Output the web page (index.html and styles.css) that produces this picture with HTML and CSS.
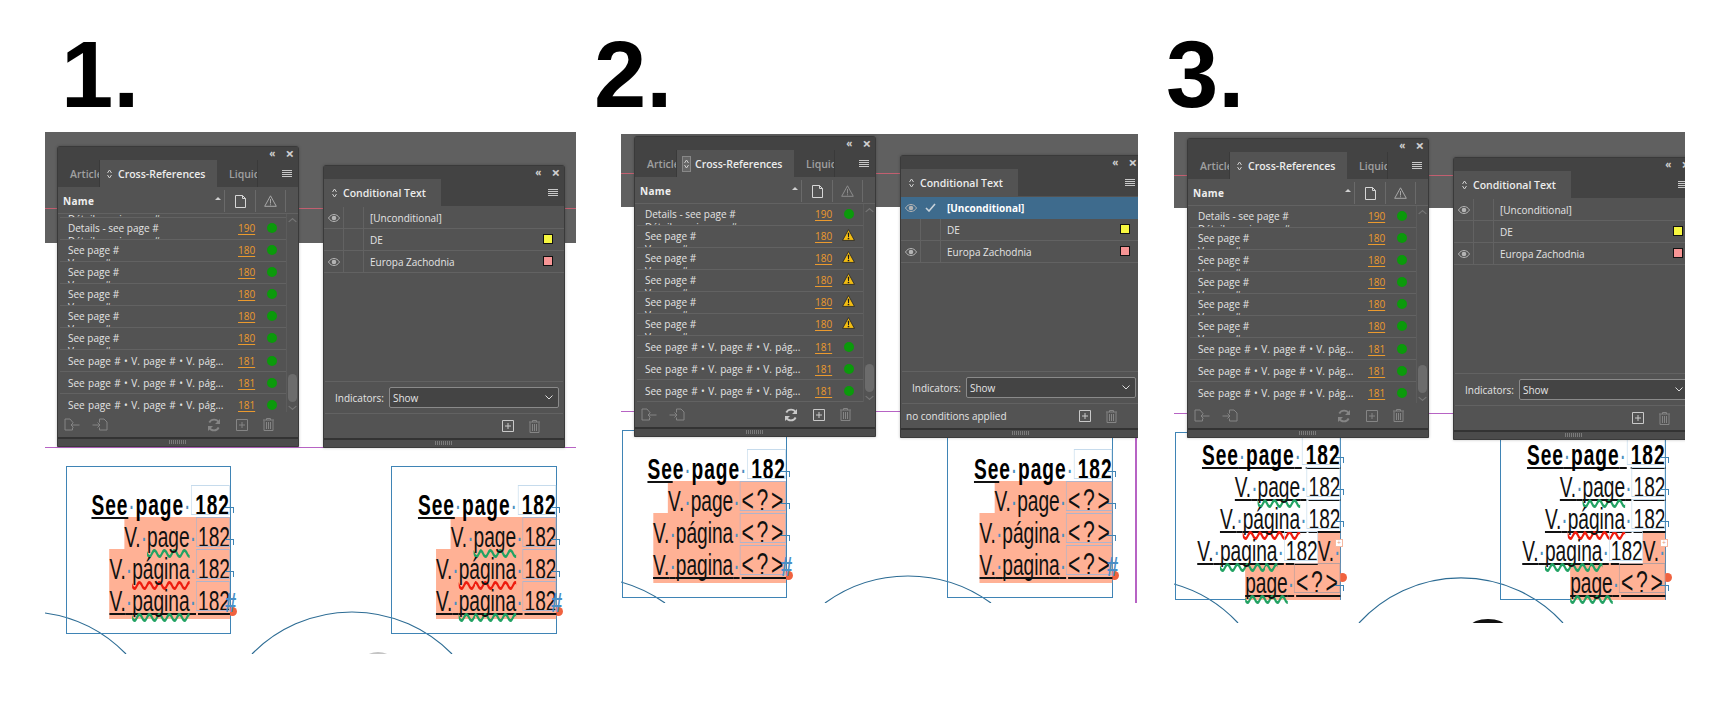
FILE: index.html
```html
<!DOCTYPE html>
<html lang="en">
<head>
    <meta charset="UTF-8">
    <meta name="viewport" content="width=device-width, initial-scale=1.0">
    <title>Cross-References and Conditional Text</title>
    <link rel="stylesheet" href="styles.css">
</head>
<body>
    <svg class="sprite" width="0" height="0">
        <symbol id="i-out" viewBox="0 0 16 14"><path d="M8.5 4.500V4L6 1H1v11h7.500V9.500M15.500 7H7M9.500 4.500 7 7l2.500 2.500" fill="none" stroke="currentColor"/></symbol>
        <symbol id="i-in" viewBox="0 0 16 14"><path d="M7.500 4.500V1H12l3 3v8H7.500V9.500M.5 7H8M5.500 4.500 8 7l-2.500 2.500" fill="none" stroke="currentColor"/></symbol>
        <symbol id="i-sync" viewBox="0 0 14 14"><path d="M11.800 4.500A5.300 5.300 0 0 0 2.300 4.500M2.200 9.500a5.300 5.300 0 0 0 9.500 0" fill="none" stroke="currentColor" stroke-width="1.800"/><path d="M13 1v5H8zM1 13V8h5z" fill="currentColor"/></symbol>
        <symbol id="i-new" viewBox="0 0 12 12"><path d="M.5.500h11v11H.500zM6 3v6M3 6h6" fill="none" stroke="currentColor"/></symbol>
        <symbol id="i-trash" viewBox="0 0 11 13"><path d="M0 2h11M3.500 2V.500h4V2M1 2.500v10h9v-10M3.500 4v7M5.500 4v7M7.500 4v7" fill="none" stroke="currentColor"/></symbol>
        <symbol id="i-eye" viewBox="0 0 12 8"><path d="M.5 4C2 1.500 4 .5 6 .5S10 1.500 11.500 4C10 6.500 8 7.500 6 7.500S2 6.500.5 4z" fill="none" stroke="currentColor"/><circle cx="6" cy="4" r="2.300" fill="currentColor"/></symbol>
        <symbol id="i-warn" viewBox="0 0 12 11"><path d="M6 .5 11.500 10.500H.5z" fill="#f3bd12" stroke="#2a2a2a" stroke-width=".8"/><path d="M5.300 3.500h1.400L6.400 7.500h-.8zM5.300 8.200h1.400v1.300H5.300z" fill="#1a1a1a"/></symbol>
        <symbol id="i-chev" viewBox="0 0 5 10"><path d="M.5 4 2.500 1l2 3M.5 6l2 3 2-3" fill="none" stroke="currentColor"/></symbol>
    </svg>

    <div class="sheet">

        <!-- 1 -->
        <section class="fig fig-1">
            <h2 class="num">1.</h2>
            <div class="stage">
                <div class="band"></div>
                <div class="guide guide-pink"></div>
                <div class="guide guide-purple"></div>
                <svg class="arcs" width="531" height="522">
                    <path d="M0 481A140 140 0 0 1 81 522M207 522A140 140 0 0 1 407 522"/>
                    <ellipse class="blob-gray" cx="333" cy="526" rx="12" ry="6"/>
                </svg>

                <div class="frame frame-a">
                    <div class="story">
                        <div class="line bold"><span class="ul">See</span><i class="sp">·</i>page<i class="sp">·</i><span class="ref ref-first">182</span></div>
                        <div class="line"><span class="hl">V.<i class="sp">·</i><span class="wavy-g">page</span><i class="sp">·</i><span class="ref">182</span></span></div>
                        <div class="line"><span class="hl">V.<i class="sp">·</i><span class="wavy-r">página</span><i class="sp">·</i><span class="ref">182</span></span></div>
                        <div class="line"><span class="hl hl-last"><span class="ul">V.<i class="sp">·</i><span class="wavy-g">pagina</span><i class="sp">·</i></span><span class="ref ul">182</span></span></div>
                    </div>
                    <div class="marks"><b class="hook"></b><b class="hook"></b><b class="hook"></b><b class="end">#</b></div>
                    <b class="overset"></b>
                </div>
                <div class="frame frame-b">
                    <div class="story">
                        <div class="line bold"><span class="ul">See</span><i class="sp">·</i>page<i class="sp">·</i><span class="ref ref-first">182</span></div>
                        <div class="line"><span class="hl">V.<i class="sp">·</i><span class="wavy-g">page</span><i class="sp">·</i><span class="ref">182</span></span></div>
                        <div class="line"><span class="hl">V.<i class="sp">·</i><span class="wavy-r">página</span><i class="sp">·</i><span class="ref">182</span></span></div>
                        <div class="line"><span class="hl hl-last"><span class="ul">V.<i class="sp">·</i><span class="wavy-g">pagina</span><i class="sp">·</i></span><span class="ref ul">182</span></span></div>
                    </div>
                    <div class="marks"><b class="hook"></b><b class="hook"></b><b class="hook"></b><b class="end">#</b></div>
                    <b class="overset"></b>
                </div>

                <div class="panel panel-xref">
                    <div class="panel-top"><span class="collapse">«</span><span class="close">×</span></div>
                    <div class="tabs">
                        <div class="tab tab-first"><span>Article</span></div>
                        <div class="tab tab-on"><svg class="chev"><use href="#i-chev"/></svg>Cross-References</div>
                        <div class="tab tab-last"><span>Liquid</span></div>
                        <div class="menu"><b></b><b></b><b></b><b></b></div>
                    </div>
                    <div class="xref-head">
                        <strong>Name</strong><span class="sort"></span>
                        <div class="col"><svg width="11" height="13" viewBox="0 0 11 13"><path d="M.5.500h7l3 3v9H.500zM7.500.500v3h3" fill="none" stroke="#d6d6d6"/></svg></div>
                        <div class="col"><svg width="13" height="12" viewBox="0 0 13 12"><path d="M6.500.8 12.300 11.300H.7zM6.500 4v4.500M6.500 9.300v1" fill="none" stroke="#a8a8a8"/></svg></div>
                    </div>
                    <div class="xref-body">
                        <div class="rows">
                            <div class="row row-peek"><div class="name"><span class="next">Détails - voir page #</span></div></div>
                            <div class="row"><div class="name">Details - see page #<span class="next">Détails - voir page #</span></div><a class="page">190</a><b class="dot"></b></div>
                            <div class="row"><div class="name">See page #<span class="next">V. page #</span></div><a class="page">180</a><b class="dot"></b></div>
                            <div class="row"><div class="name">See page #<span class="next">V. page #</span></div><a class="page">180</a><b class="dot"></b></div>
                            <div class="row"><div class="name">See page #<span class="next">V. page #</span></div><a class="page">180</a><b class="dot"></b></div>
                            <div class="row"><div class="name">See page #<span class="next">V. page #</span></div><a class="page">180</a><b class="dot"></b></div>
                            <div class="row"><div class="name">See page #<span class="next">V. page #</span></div><a class="page">180</a><b class="dot"></b></div>
                            <div class="row row-long"><div class="name">See page # • V. page # • V. pág...</div><a class="page">181</a><b class="dot"></b></div>
                            <div class="row row-long"><div class="name">See page # • V. page # • V. pág...</div><a class="page">181</a><b class="dot"></b></div>
                            <div class="row row-long"><div class="name">See page # • V. page # • V. pág...</div><a class="page">181</a><b class="dot"></b></div>
                        </div>
                        <div class="scroll"><span class="up"></span><span class="thumb"></span><span class="down"></span></div>
                    </div>
                    <div class="foot">
                        <svg class="ico ico-wide"><use href="#i-out"/></svg>
                        <svg class="ico ico-wide"><use href="#i-in"/></svg>
                        <svg class="ico ico-sync push"><use href="#i-sync"/></svg>
                        <svg class="ico ico-new"><use href="#i-new"/></svg>
                        <svg class="ico ico-trash"><use href="#i-trash"/></svg>
                    </div>
                    <div class="grip"><span></span></div>
                </div>

                <div class="panel panel-cond">
                    <div class="panel-top"><span class="collapse">«</span><span class="close">×</span></div>
                    <div class="tabs">
                        <div class="tab tab-on tab-cond"><svg class="chev"><use href="#i-chev"/></svg>Conditional Text</div>
                        <div class="menu"><b></b><b></b><b></b><b></b></div>
                    </div>
                    <div class="cond-list">
                        <div class="cond-row"><div class="cond-eye"><svg><use href="#i-eye"/></svg></div><div class="cond-check"></div><div class="cond-name">[Unconditional]</div></div>
                        <div class="cond-row"><div class="cond-eye"></div><div class="cond-check"></div><div class="cond-name">DE</div><b class="swatch swatch-y"></b></div>
                        <div class="cond-row"><div class="cond-eye"><svg><use href="#i-eye"/></svg></div><div class="cond-check"></div><div class="cond-name">Europa Zachodnia</div><b class="swatch swatch-p"></b></div>
                    </div>
                    <div class="indicators"><label>Indicators:</label><div class="select">Show<svg width="8" height="5" viewBox="0 0 8 5"><path d="M.5.500 4 4 7.500.500" fill="none" stroke="#ddd"/></svg></div></div>
                    <div class="foot">
                        <svg class="ico ico-new bright push"><use href="#i-new"/></svg>
                        <svg class="ico ico-trash"><use href="#i-trash"/></svg>
                    </div>
                    <div class="grip"><span></span></div>
                </div>
            </div>
        </section>

        <!-- 2 -->
        <section class="fig fig-2">
            <h2 class="num">2.</h2>
            <div class="stage">
                <div class="band"></div>
                <div class="guide guide-pink"></div>
                <div class="guide guide-purple"></div>
                <div class="guide-v"></div>
                <svg class="arcs" width="517" height="469">
                    <path d="M0 448A141 141 0 0 1 44 469M204 469A141 141 0 0 1 370 469"/>
                </svg>

                <div class="frame frame-a">
                    <div class="story">
                        <div class="line bold"><span class="ul">Se</span>e<i class="sp">·</i>page<i class="sp">·</i><span class="ref ref-first">182</span></div>
                        <div class="line"><span class="hl">V.<i class="sp">·</i>page<i class="sp">·</i><span class="ref ref-q">&lt;?&gt;</span></span></div>
                        <div class="line"><span class="hl">V.<i class="sp">·</i>página<i class="sp">·</i><span class="ref ref-q">&lt;?&gt;</span></span></div>
                        <div class="line"><span class="hl hl-last"><span class="ul">V.<i class="sp">·</i>pagina<i class="sp">·</i></span><span class="ref ref-q ul">&lt;?&gt;</span></span></div>
                    </div>
                    <div class="marks"><b class="hook"></b><b class="hook"></b><b class="hook"></b><b class="end">#</b></div>
                    <b class="overset"></b>
                </div>
                <div class="frame frame-b">
                    <div class="story">
                        <div class="line bold"><span class="ul">Se</span>e<i class="sp">·</i>page<i class="sp">·</i><span class="ref ref-first">182</span></div>
                        <div class="line"><span class="hl">V.<i class="sp">·</i>page<i class="sp">·</i><span class="ref ref-q">&lt;?&gt;</span></span></div>
                        <div class="line"><span class="hl">V.<i class="sp">·</i>página<i class="sp">·</i><span class="ref ref-q">&lt;?&gt;</span></span></div>
                        <div class="line"><span class="hl hl-last"><span class="ul">V.<i class="sp">·</i>pagina<i class="sp">·</i></span><span class="ref ref-q ul">&lt;?&gt;</span></span></div>
                    </div>
                    <div class="marks"><b class="hook"></b><b class="hook"></b><b class="hook"></b><b class="end">#</b></div>
                    <b class="overset"></b>
                </div>

                <div class="panel panel-xref">
                    <div class="panel-top"><span class="collapse">«</span><span class="close">×</span></div>
                    <div class="tabs">
                        <div class="tab tab-first"><span>Article</span></div>
                        <div class="tab tab-on"><svg class="chev chev-box"><use href="#i-chev"/></svg>Cross-References</div>
                        <div class="tab tab-last"><span>Liquid</span></div>
                        <div class="menu"><b></b><b></b><b></b><b></b></div>
                    </div>
                    <div class="xref-head">
                        <strong>Name</strong><span class="sort"></span>
                        <div class="col"><svg width="11" height="13" viewBox="0 0 11 13"><path d="M.5.500h7l3 3v9H.500zM7.500.500v3h3" fill="none" stroke="#d6d6d6"/></svg></div>
                        <div class="col"><svg width="13" height="12" viewBox="0 0 13 12"><path d="M6.500.8 12.300 11.300H.7zM6.500 4v4.500M6.500 9.300v1" fill="none" stroke="#8c8c8c"/></svg></div>
                    </div>
                    <div class="xref-body">
                        <div class="rows">
                            <div class="row"><div class="name">Details - see page #<span class="next">Détails - voir page #</span></div><a class="page">190</a><b class="dot"></b></div>
                            <div class="row"><div class="name">See page #<span class="next">V. page #</span></div><a class="page">180</a><svg class="warn"><use href="#i-warn"/></svg></div>
                            <div class="row"><div class="name">See page #<span class="next">V. page #</span></div><a class="page">180</a><svg class="warn"><use href="#i-warn"/></svg></div>
                            <div class="row"><div class="name">See page #<span class="next">V. page #</span></div><a class="page">180</a><svg class="warn"><use href="#i-warn"/></svg></div>
                            <div class="row"><div class="name">See page #<span class="next">V. page #</span></div><a class="page">180</a><svg class="warn"><use href="#i-warn"/></svg></div>
                            <div class="row"><div class="name">See page #<span class="next">V. page #</span></div><a class="page">180</a><svg class="warn"><use href="#i-warn"/></svg></div>
                            <div class="row row-long"><div class="name">See page # • V. page # • V. pág...</div><a class="page">181</a><b class="dot"></b></div>
                            <div class="row row-long"><div class="name">See page # • V. page # • V. pág...</div><a class="page">181</a><b class="dot"></b></div>
                            <div class="row row-long"><div class="name">See page # • V. page # • V. pág...</div><a class="page">181</a><b class="dot"></b></div>
                        </div>
                        <div class="scroll"><span class="up"></span><span class="thumb"></span><span class="down"></span></div>
                    </div>
                    <div class="foot">
                        <svg class="ico ico-wide"><use href="#i-out"/></svg>
                        <svg class="ico ico-wide"><use href="#i-in"/></svg>
                        <svg class="ico ico-sync bright push"><use href="#i-sync"/></svg>
                        <svg class="ico ico-new bright"><use href="#i-new"/></svg>
                        <svg class="ico ico-trash"><use href="#i-trash"/></svg>
                    </div>
                    <div class="grip"><span></span></div>
                </div>

                <div class="panel panel-cond">
                    <div class="panel-top"><span class="collapse">«</span><span class="close">×</span></div>
                    <div class="tabs">
                        <div class="tab tab-on tab-cond"><svg class="chev"><use href="#i-chev"/></svg>Conditional Text</div>
                        <div class="menu"><b></b><b></b><b></b><b></b></div>
                    </div>
                    <div class="cond-list">
                        <div class="cond-row cond-sel"><div class="cond-eye"><svg><use href="#i-eye"/></svg></div><div class="cond-check"><svg width="11" height="9" viewBox="0 0 11 9"><path d="M1 5l3 3 6-7" fill="none" stroke="#c8d2da" stroke-width="1.600"/></svg></div><div class="cond-name">[Unconditional]</div></div>
                        <div class="cond-row"><div class="cond-eye"></div><div class="cond-check"></div><div class="cond-name">DE</div><b class="swatch swatch-y"></b></div>
                        <div class="cond-row"><div class="cond-eye"><svg><use href="#i-eye"/></svg></div><div class="cond-check"></div><div class="cond-name">Europa Zachodnia</div><b class="swatch swatch-p"></b></div>
                    </div>
                    <div class="indicators"><label>Indicators:</label><div class="select">Show<svg width="8" height="5" viewBox="0 0 8 5"><path d="M.5.500 4 4 7.500.500" fill="none" stroke="#ddd"/></svg></div></div>
                    <div class="foot">
                        <span class="foot-note">no conditions applied</span>
                        <svg class="ico ico-new bright push"><use href="#i-new"/></svg>
                        <svg class="ico ico-trash"><use href="#i-trash"/></svg>
                    </div>
                    <div class="grip"><span></span></div>
                </div>
            </div>
        </section>

        <!-- 3 -->
        <section class="fig fig-3">
            <h2 class="num">3.</h2>
            <div class="stage">
                <div class="band"></div>
                <div class="guide guide-pink"></div>
                <div class="guide guide-purple"></div>
                <svg class="arcs" width="511" height="491">
                    <path d="M0 452A138 138 0 0 1 64 491M185 491A138 138 0 0 1 389 491"/>
                    <ellipse class="blob-dark" cx="314" cy="494" rx="17" ry="7"/>
                </svg>

                <div class="frame frame-a">
                    <div class="story">
                        <div class="line bold"><span class="ul">See<i class="sp">·</i>page<i class="sp">·</i></span><span class="ref ref-first ul">182</span></div>
                        <div class="line"><span class="ul">V.<i class="sp">·</i><span class="wavy-g">page</span><i class="sp">·</i></span><span class="ref ul">182</span></div>
                        <div class="line"><span class="ul">V.<i class="sp">·</i><span class="wavy-r">página</span><i class="sp">·</i></span><span class="ref ul">182</span></div>
                        <div class="line"><span class="ul">V.<i class="sp">·</i><span class="wavy-g">pagina</span><i class="sp">·</i></span><span class="ref ul">182</span><span class="hl">V.<i class="sp">·</i></span></div>
                        <div class="line"><span class="hl hl-last"><span class="ul"><span class="wavy-g">page</span><i class="sp">·</i></span><span class="ref ref-q ul">&lt;?&gt;</span></span></div>
                    </div>
                    <div class="marks"><b class="hook"></b><b class="hook"></b><b class="hook"></b><b class="plus">+</b><b class="hook"></b></div>
                    <b class="overset"></b>
                </div>
                <div class="frame frame-b">
                    <div class="story">
                        <div class="line bold"><span class="ul">See<i class="sp">·</i>page<i class="sp">·</i></span><span class="ref ref-first ul">182</span></div>
                        <div class="line"><span class="ul">V.<i class="sp">·</i><span class="wavy-g">page</span><i class="sp">·</i></span><span class="ref ul">182</span></div>
                        <div class="line"><span class="ul">V.<i class="sp">·</i><span class="wavy-r">página</span><i class="sp">·</i></span><span class="ref ul">182</span></div>
                        <div class="line"><span class="ul">V.<i class="sp">·</i><span class="wavy-g">pagina</span><i class="sp">·</i></span><span class="ref ul">182</span><span class="hl">V.<i class="sp">·</i></span></div>
                        <div class="line"><span class="hl hl-last"><span class="ul"><span class="wavy-g">page</span><i class="sp">·</i></span><span class="ref ref-q ul">&lt;?&gt;</span></span></div>
                    </div>
                    <div class="marks"><b class="hook"></b><b class="hook"></b><b class="hook"></b><b class="plus">+</b><b class="hook"></b></div>
                    <b class="overset"></b>
                </div>

                <div class="panel panel-xref">
                    <div class="panel-top"><span class="collapse">«</span><span class="close">×</span></div>
                    <div class="tabs">
                        <div class="tab tab-first"><span>Article</span></div>
                        <div class="tab tab-on"><svg class="chev"><use href="#i-chev"/></svg>Cross-References</div>
                        <div class="tab tab-last"><span>Liquid</span></div>
                        <div class="menu"><b></b><b></b><b></b><b></b></div>
                    </div>
                    <div class="xref-head">
                        <strong>Name</strong><span class="sort"></span>
                        <div class="col"><svg width="11" height="13" viewBox="0 0 11 13"><path d="M.5.500h7l3 3v9H.500zM7.500.500v3h3" fill="none" stroke="#d6d6d6"/></svg></div>
                        <div class="col"><svg width="13" height="12" viewBox="0 0 13 12"><path d="M6.500.8 12.300 11.300H.7zM6.500 4v4.500M6.500 9.300v1" fill="none" stroke="#a8a8a8"/></svg></div>
                    </div>
                    <div class="xref-body">
                        <div class="rows">
                            <div class="row"><div class="name">Details - see page #<span class="next">Détails - voir page #</span></div><a class="page">190</a><b class="dot"></b></div>
                            <div class="row"><div class="name">See page #<span class="next">V. page #</span></div><a class="page">180</a><b class="dot"></b></div>
                            <div class="row"><div class="name">See page #<span class="next">V. page #</span></div><a class="page">180</a><b class="dot"></b></div>
                            <div class="row"><div class="name">See page #<span class="next">V. page #</span></div><a class="page">180</a><b class="dot"></b></div>
                            <div class="row"><div class="name">See page #<span class="next">V. page #</span></div><a class="page">180</a><b class="dot"></b></div>
                            <div class="row"><div class="name">See page #<span class="next">V. page #</span></div><a class="page">180</a><b class="dot"></b></div>
                            <div class="row row-long"><div class="name">See page # • V. page # • V. pág...</div><a class="page">181</a><b class="dot"></b></div>
                            <div class="row row-long"><div class="name">See page # • V. page # • V. pág...</div><a class="page">181</a><b class="dot"></b></div>
                            <div class="row row-long"><div class="name">See page # • V. page # • V. pág...</div><a class="page">181</a><b class="dot"></b></div>
                        </div>
                        <div class="scroll"><span class="up"></span><span class="thumb"></span><span class="down"></span></div>
                    </div>
                    <div class="foot">
                        <svg class="ico ico-wide"><use href="#i-out"/></svg>
                        <svg class="ico ico-wide"><use href="#i-in"/></svg>
                        <svg class="ico ico-sync push"><use href="#i-sync"/></svg>
                        <svg class="ico ico-new"><use href="#i-new"/></svg>
                        <svg class="ico ico-trash"><use href="#i-trash"/></svg>
                    </div>
                    <div class="grip"><span></span></div>
                </div>

                <div class="panel panel-cond">
                    <div class="panel-top"><span class="collapse">«</span><span class="close">×</span></div>
                    <div class="tabs">
                        <div class="tab tab-on tab-cond"><svg class="chev"><use href="#i-chev"/></svg>Conditional Text</div>
                        <div class="menu"><b></b><b></b><b></b><b></b></div>
                    </div>
                    <div class="cond-list">
                        <div class="cond-row"><div class="cond-eye"><svg><use href="#i-eye"/></svg></div><div class="cond-check"></div><div class="cond-name">[Unconditional]</div></div>
                        <div class="cond-row"><div class="cond-eye"></div><div class="cond-check"></div><div class="cond-name">DE</div><b class="swatch swatch-y"></b></div>
                        <div class="cond-row"><div class="cond-eye"><svg><use href="#i-eye"/></svg></div><div class="cond-check"></div><div class="cond-name">Europa Zachodnia</div><b class="swatch swatch-p"></b></div>
                    </div>
                    <div class="indicators"><label>Indicators:</label><div class="select">Show<svg width="8" height="5" viewBox="0 0 8 5"><path d="M.5.500 4 4 7.500.500" fill="none" stroke="#ddd"/></svg></div></div>
                    <div class="foot">
                        <svg class="ico ico-new bright push"><use href="#i-new"/></svg>
                        <svg class="ico ico-trash"><use href="#i-trash"/></svg>
                    </div>
                    <div class="grip"><span></span></div>
                </div>
            </div>
        </section>

    </div>
</body>
</html>
```

FILE: styles.css
```css
body {
    margin: 0;
    background-color: white;
    font-family: "Open Sans", Arial, sans-serif;
    height: 716px;
    overflow: hidden;
}

.sprite {
    position: absolute;
}

.sheet {
    display: flex;
    align-items: flex-start;
    padding-left: 45px;
}

.fig {
    flex: none;
}

.fig-1 { width: 531px; margin-right: 45px; }
.fig-2 { width: 517px; margin-right: 36px; }
.fig-3 { width: 511px; }

.num {
    height: 104px;
    margin: 0;
    padding-top: 28px;
    font-family: "Liberation Sans", Arial, sans-serif;
    font-size: 94px;
    line-height: 94px;
    font-weight: 700;
    color: black;
}

.fig-1 .num { margin-left: 16px; }
.fig-2 .num { margin-left: -27px; }
.fig-3 .num { margin-left: -8px; }

/* the page canvas under each screenshot */
.stage {
    position: relative;
    overflow: hidden;
}

.fig-1 .stage { height: 522px; }
.fig-2 .stage { height: 469px; margin-top: 2px; }
.fig-3 .stage { height: 491px; }

.band {
    background-color: #606060;
}

.fig-1 .band { height: 111px; }
.fig-2 .band { height: 73px; }
.fig-3 .band { height: 76px; }

.guide {
    position: absolute;
    left: 0;
    right: 0;
    height: 1px;
}

.guide-pink { background-color: #c25f70; }
.guide-purple { background-color: #b763c4; }

.fig-1 .guide-pink { top: 76px; }
.fig-1 .guide-purple { top: 315px; }
.fig-2 .guide-pink { top: 39px; }
.fig-2 .guide-purple { top: 277px; }
.fig-3 .guide-pink { top: 43px; }
.fig-3 .guide-purple { top: 281px; }

.guide-v {
    position: absolute;
    left: 514px;
    top: 277px;
    bottom: 0;
    width: 2px;
    background-color: #b763c4;
}

.arcs {
    position: absolute;
    left: 0;
    top: 0;
}

.arcs path {
    fill: none;
    stroke: #2d6c94;
    stroke-width: 1.2;
}

.blob-gray { fill: #c4c4c4; }
.blob-dark { fill: #111; }

/* text frames */
.frame {
    position: absolute;
    box-sizing: border-box;
    height: 168px;
    border: 1px solid #3f84b5;
    z-index: 0;
}

.fig-1 .frame { top: 334px; }
.fig-2 .frame { top: 296px; }
.fig-3 .frame { top: 300px; }

.fig-1 .frame-a { left: 21px; width: 165px; }
.fig-1 .frame-b { left: 346px; width: 166px; }
.fig-2 .frame-a { left: 1px; width: 165px; }
.fig-2 .frame-b { left: 326px; width: 166px; }
.fig-3 .frame-a { left: 1px; width: 166px; }
.fig-3 .frame-b { left: 326px; width: 166px; }

.story {
    width: 151.5%;
    margin-left: -51.5%;
    padding-top: 18px;
    transform: scaleX(.66);
    transform-origin: top right;
    font-family: "Liberation Sans", Arial, sans-serif;
    font-size: 29px;
    color: #111;
    text-align: right;
    white-space: nowrap;
}

.fig-3 .story { padding-top: 2px; }

.line {
    height: 32px;
    line-height: 40px;
}

.line.bold {
    font-weight: 700;
    letter-spacing: 1.4px;
    color: black;
}

.hl {
    position: relative;
    display: inline-block;
    height: 32px;
    vertical-align: top;
}

.hl::before {
    content: "";
    position: absolute;
    top: 0;
    right: 0;
    bottom: 0;
    left: 0;
    z-index: -1;
    background-color: #ffb195;
}

.hl-last::before { bottom: -6px; }
.fig-3 .hl-last::before { bottom: -5px; }

.sp {
    font-style: normal;
    font-weight: 400;
    color: #4c8fc0;
}

.ref {
    display: inline-block;
    height: 30px;
    padding-left: 3px;
    line-height: 40px;
    vertical-align: top;
    outline: 1px solid #aeb4cc;
    outline-offset: -1px;
}

.ref-first {
    padding-left: 6px;
    outline-color: #c6dbec;
}

.ref-q {
    font-size: 32px;
    line-height: 38px;
    letter-spacing: 4px;
}

.fig-3 .ref { outline-color: #c6dbec; }
.fig-3 .ref-q { outline-color: #b8a0a0; }

.ul {
    text-decoration: underline solid #111 2px;
    text-decoration-skip-ink: none;
    text-underline-offset: 2px;
}

.wavy-g,
.wavy-r {
    text-decoration-line: underline;
    text-decoration-style: wavy;
    text-decoration-thickness: 3px;
    text-decoration-skip-ink: none;
    text-underline-offset: 2px;
}

.wavy-g { text-decoration-color: #22a263; }
.wavy-r { text-decoration-color: #ee1c0e; }

.marks {
    position: absolute;
    left: 100%;
    top: 18px;
    display: flex;
    flex-direction: column;
    color: #3f84b5;
}

.fig-3 .marks { top: 2px; }

.hook {
    position: relative;
    display: block;
    width: 5px;
    height: 32px;
}

.hook::after {
    content: "";
    position: absolute;
    left: -5px;
    top: 22px;
    width: 8px;
    height: 5px;
    border-top: 1.5px solid #3f84b5;
    border-right: 1.5px solid #3f84b5;
}

.end {
    display: block;
    margin-left: -7px;
    font-family: "Liberation Sans", Arial, sans-serif;
    font-size: 27px;
    font-weight: 700;
    line-height: 44px;
    color: #4a8fc6;
    transform: scaleX(.75);
}

.plus {
    display: block;
    box-sizing: border-box;
    width: 8px;
    height: 8px;
    margin: 8px 0 16px -5px;
    border: 1px solid #f5b9a2;
    background-color: white;
    font-size: 7px;
    font-weight: 400;
    line-height: 6px;
    text-align: center;
    color: #e89a80;
}

.overset {
    position: absolute;
    right: -7px;
    top: 140px;
    width: 9px;
    height: 9px;
    border-radius: 50%;
    background-color: #f0623f;
    z-index: -1;
}

/* InDesign panels */
.panel {
    position: absolute;
    box-sizing: border-box;
    display: flex;
    flex-direction: column;
    width: 242px;
    border: 1px solid #3a3a3a;
    border-radius: 3px 3px 0 0;
    background-color: #535353;
    box-shadow: 0 0 3px rgba(0, 0, 0, 0.25);
    font-size: 10px;
    color: #e4e4e4;
    z-index: 2;
}

.fig-1 .panel-xref { left: 12px; top: 14px; height: 301px; }
.fig-1 .panel-cond { left: 278px; top: 33px; height: 283px; }
.fig-2 .panel-xref { left: 13px; top: 2px; height: 301px; }
.fig-2 .panel-cond { left: 279px; top: 21px; height: 283px; }
.fig-3 .panel-xref { left: 13px; top: 6px; height: 300px; }
.fig-3 .panel-cond { left: 279px; top: 25px; height: 283px; }

.panel-top {
    display: flex;
    flex: none;
    justify-content: flex-end;
    align-items: center;
    gap: 10px;
    height: 13px;
    padding-right: 4px;
    background-color: #434343;
    color: #d0d0d0;
}

.collapse {
    font-size: 10px;
    font-weight: 700;
    line-height: 13px;
}

.close {
    font-size: 15px;
    font-weight: 700;
    line-height: 13px;
}

.tabs {
    display: flex;
    flex: none;
    align-items: stretch;
    height: 27px;
    background-color: #434343;
}

.tab {
    display: flex;
    box-sizing: border-box;
    align-items: center;
    overflow: hidden;
    font-size: 10.5px;
    font-weight: 600;
    white-space: nowrap;
    color: #a0a0a0;
}

.tab-first {
    width: 42px;
    padding-left: 12px;
    border-right: 1px solid #3a3a3a;
}

.tab-on {
    width: 117px;
    background-color: #535353;
    color: #ececec;
}

.tab-last {
    width: 41px;
    padding-left: 12px;
    border-right: 1px solid #3a3a3a;
}

.chev {
    flex: none;
    width: 5px;
    height: 10px;
    margin: 0 6px 0 7px;
    color: #cfcfcf;
}

.chev-box {
    box-sizing: content-box;
    padding: 2px 1px;
    margin: 0 5px 0 6px;
    background-color: #666;
    outline: 1px solid #888;
}

.tab-cond .chev {
    margin-left: 8px;
}

.menu {
    display: flex;
    flex-direction: column;
    gap: 1px;
    margin: auto 6px auto auto;
}

.menu b {
    display: block;
    width: 10px;
    height: 1px;
    background-color: #c8c8c8;
}

/* cross references */
.xref-head {
    display: flex;
    flex: none;
    align-items: center;
    height: 27px;
    padding: 2px 12px 0 5px;
    box-sizing: border-box;
    border-bottom: 1px solid #626262;
}

.xref-head strong {
    flex: 1;
    font-size: 10px;
    letter-spacing: .3px;
    color: #eee;
}

.sort {
    width: 0;
    height: 0;
    margin-right: 3px;
    margin-bottom: 6px;
    border-left: 3px solid transparent;
    border-right: 3px solid transparent;
    border-bottom: 3px solid #d0d0d0;
}

.col {
    display: flex;
    width: 31px;
    height: 22px;
    box-sizing: border-box;
    align-items: center;
    justify-content: center;
    border-left: 1px solid #6a6a6a;
}

.col:last-child {
    border-right: 1px solid #6a6a6a;
}

.xref-body {
    display: flex;
    flex: 1;
    min-height: 0;
    overflow: hidden;
}

.rows {
    flex: 1;
    min-width: 0;
    padding-left: 2px;
    overflow: hidden;
}

.row {
    display: flex;
    box-sizing: border-box;
    height: 22px;
    padding: 3px 0 0 8px;
    overflow: hidden;
    border-bottom: 1px solid #626262;
    line-height: 14px;
    white-space: nowrap;
}

.row-peek {
    height: 4px;
    padding-top: 0;
}

.row-long {
    padding-top: 4px;
}

.row-long .name {
    word-spacing: .8px;
}

.name {
    flex: 1;
    min-width: 0;
}

.next {
    display: block;
    margin-top: -1px;
}

.row-peek .next {
    margin-top: -2px;
}

.page {
    flex: none;
    width: 16px;
    font-size: 10px;
    text-align: center;
    text-decoration: underline;
    text-underline-offset: 2px;
    color: #eb9a2e;
}

.dot {
    flex: none;
    width: 10px;
    height: 10px;
    margin: 2px 9px 0 13px;
    border-radius: 50%;
    background-color: #0b9a0b;
}

.warn {
    flex: none;
    width: 13px;
    height: 12px;
    margin: 0 8px 0 11px;
}

.scroll {
    position: relative;
    flex: none;
    width: 11px;
    border-left: 1px solid #5c5c5c;
}

.thumb {
    position: absolute;
    left: 1px;
    bottom: 10px;
    width: 9px;
    height: 28px;
    border-radius: 5px;
    background-color: #6c6c6c;
}

.up,
.down {
    position: absolute;
    left: 3px;
    width: 4px;
    height: 4px;
    border-top: 1px solid #767676;
    border-left: 1px solid #767676;
    transform: scaleX(1.2) rotate(45deg);
}

.up { top: 5px; }
.down { bottom: 3px; transform: scaleX(1.2) rotate(225deg); }

.foot {
    display: flex;
    flex: none;
    align-items: center;
    gap: 12px;
    height: 25px;
    box-sizing: border-box;
    padding: 0 24px 0 6px;
}

.panel-cond .foot {
    height: 24px;
}

.ico { flex: none; color: #858585; }
.ico.bright { color: #c9c9c9; }
.ico-wide { width: 16px; height: 14px; }
.ico-sync { width: 14px; height: 14px; margin-right: 3px; }
.ico-new { width: 12px; height: 12px; margin-right: 3px; }
.ico-trash { width: 11px; height: 13px; }
.push { margin-left: auto; }

.foot-note {
    margin-left: -1px;
    font-size: 10px;
    color: #e4e4e4;
}

.grip {
    display: flex;
    flex: none;
    justify-content: center;
    height: 9px;
    box-sizing: border-box;
    border-top: 2px solid #333;
    background-color: #4b4b4b;
}

.grip span {
    width: 18px;
    height: 4px;
    margin-top: 1px;
    background-image: repeating-linear-gradient(90deg, #7a7a7a 0 1px, transparent 1px 2px);
}

/* conditional text */
.cond-list {
    flex: 1;
    padding-top: 1px;
}

.cond-row {
    display: flex;
    align-items: stretch;
    height: 22px;
    box-sizing: border-box;
    border-bottom: 1px solid #626262;
}

.cond-eye,
.cond-check {
    display: flex;
    flex: none;
    width: 20px;
    box-sizing: border-box;
    align-items: center;
    justify-content: center;
    border-right: 1px solid #626262;
}

.cond-eye svg {
    width: 12px;
    height: 8px;
    color: #b4b4b4;
}

.cond-name {
    flex: 1;
    padding-left: 6px;
    line-height: 22px;
}

.cond-sel {
    background-color: #3e6b8d;
    border-color: #3e6b8d;
}

.cond-sel .cond-eye,
.cond-sel .cond-check {
    border-color: #3e6b8d;
}

.cond-sel .cond-name {
    font-weight: 700;
    color: #fff;
}

.swatch {
    flex: none;
    width: 8px;
    height: 8px;
    margin: 5px 11px 0 0;
    border: 1px solid #111;
}

.swatch-y { background-color: #f7f73f; }
.swatch-p { background-color: #f79595; }

.indicators {
    display: flex;
    flex: none;
    align-items: center;
    height: 33px;
    box-sizing: border-box;
    margin: 0 1px;
    padding: 0 4px 0 10px;
    border-top: 1px solid #626262;
    border-bottom: 1px solid #626262;
}

.indicators label {
    margin-right: 5px;
}

.select {
    display: flex;
    flex: 1;
    align-items: center;
    justify-content: space-between;
    height: 21px;
    box-sizing: border-box;
    padding: 0 5px 0 3px;
    border: 1px solid #8a8a8a;
    border-radius: 2px;
    background-color: #444;
}
```
